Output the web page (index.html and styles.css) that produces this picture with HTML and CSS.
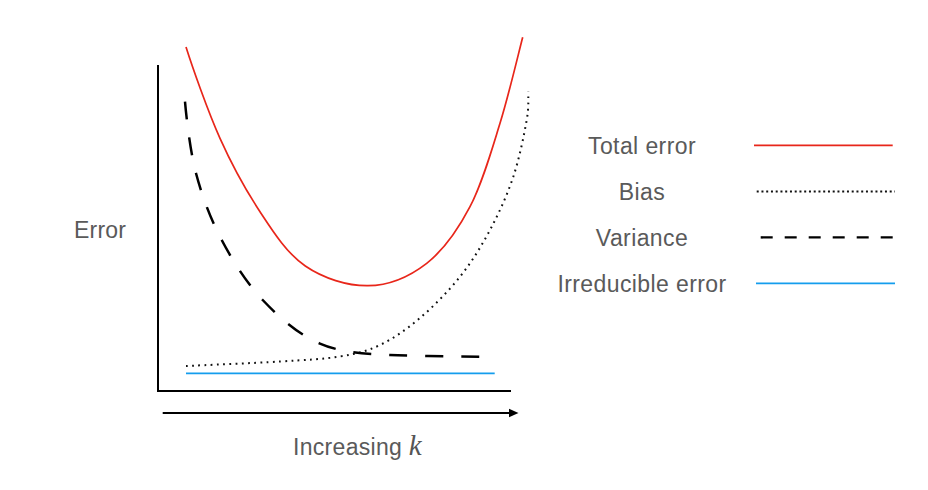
FILE: index.html
```html
<!DOCTYPE html>
<html lang="en">
<head>
<meta charset="utf-8">
<title>Bias–variance tradeoff</title>
<link rel="stylesheet" href="styles.css">
</head>
<body>
<div class="figure">
  <div class="ylabel">Error</div>
  <div class="plot-col">
    <svg class="plot" width="382" height="390" viewBox="150 30 382 390" xmlns="http://www.w3.org/2000/svg">
      <line class="axis" x1="158" y1="65" x2="158" y2="392"/>
      <line class="axis" x1="157" y1="391" x2="511" y2="391"/>
      <line class="axis" x1="162.7" y1="413" x2="511" y2="413"/>
      <polygon class="arrowhead" points="509,408.8 518.5,413 509,417.2"/>
      <line class="irreducible" x1="186" y1="373.3" x2="494.7" y2="373.3"/>
      <path class="bias" d="M186,366 C201.67,365.25 254.33,363.08 280,361.5 C305.67,359.92 323.33,359.25 340,356.5 C356.67,353.75 366.67,351.42 380,345 C393.33,338.58 406.67,329.38 420,318 C433.33,306.62 448.33,291.37 460,276.7 C471.67,262.03 481.12,246.67 490,230 C498.88,213.33 507.18,195.03 513.3,176.7 C519.42,158.37 524.2,134.17 526.7,120 C529.2,105.83 528.03,96.42 528.3,91.7"/>
      <path class="variance" d="M185,101.7 C186,113.7 189.88,150.25 196,173.3 C202.12,196.35 210.58,218.88 221.7,240 C232.82,261.12 246.43,282.78 262.7,300 C278.97,317.22 298.08,334.13 319.3,343.3 C340.52,352.47 363.33,353.8 390,355 C416.67,356.2 464.42,356.42 479.3,356.7"/>
      <path class="total" d="M186,47 C192,66 207.67,110.85 220,138.3 C232.33,165.75 246.12,190.58 260,211.7 C273.88,232.82 287.3,253.67 305.3,266 C323.3,278.33 347.43,285.98 368,285.7 C388.57,285.42 409.7,276.47 426.7,263.3 C443.7,250.13 457.78,230.03 470,206.7 C482.22,183.37 491.22,151.53 500,123.3 C508.78,95.07 518.9,51.6 522.7,37.3"/>
    </svg>
    <div class="xlabel">Increasing <span class="k">k</span></div>
  </div>
  <div class="legend">
    <div class="legend-label">Total error</div>
    <svg class="swatch" width="141" height="46" viewBox="0 0 141 46" xmlns="http://www.w3.org/2000/svg">
      <line class="total" x1="0" y1="22.4" x2="138.7" y2="22.4"/>
    </svg>
    <div class="legend-label">Bias</div>
    <svg class="swatch" width="141" height="46" viewBox="0 0 141 46" xmlns="http://www.w3.org/2000/svg">
      <line class="bias-legend" x1="2.7" y1="22.4" x2="141" y2="22.4"/>
    </svg>
    <div class="legend-label">Variance</div>
    <svg class="swatch" width="141" height="46" viewBox="0 0 141 46" xmlns="http://www.w3.org/2000/svg">
      <line class="variance-legend" x1="6.7" y1="22.4" x2="138.7" y2="22.4"/>
    </svg>
    <div class="legend-label">Irreducible error</div>
    <svg class="swatch" width="141" height="46" viewBox="0 0 141 46" xmlns="http://www.w3.org/2000/svg">
      <line class="irreducible" x1="2" y1="22.4" x2="141" y2="22.4"/>
    </svg>
  </div>
</div>
</body>
</html>
```

FILE: styles.css
```css
html, body {
  margin: 0;
  padding: 0;
  background: #ffffff;
}

.figure {
  display: flex;
  align-items: flex-start;
  width: 928px;
  height: 490px;
  overflow: hidden;
  font-family: "Liberation Sans", Arial, Helvetica, sans-serif;
  color: #5a5a5a;
}

.ylabel {
  width: 76px;
  margin: 216.8px 0 0 74px;
  font-size: 23px;
  line-height: 27px;
  letter-spacing: 0.2px;
  white-space: nowrap;
}

.plot-col {
  display: flex;
  flex-direction: column;
  margin-top: 30px;
}

.plot {
  display: block;
}

.xlabel {
  margin: 13.5px 0 0 143px;
  font-size: 23px;
  line-height: 27px;
  letter-spacing: 0.3px;
  white-space: nowrap;
}

.k {
  font-family: "Liberation Serif", "Times New Roman", serif;
  font-style: italic;
  font-size: 29px;
  line-height: 20px;
  letter-spacing: 0;
  color: #555555;
}

.axis {
  stroke: #000000;
  stroke-width: 2;
  fill: none;
}

.arrowhead {
  fill: #000000;
  stroke: none;
}

.total {
  stroke: #e8261a;
  stroke-width: 1.7;
  fill: none;
}

.irreducible {
  stroke: #149ded;
  stroke-width: 1.8;
  fill: none;
}

.bias {
  stroke: #111111;
  stroke-width: 2;
  stroke-dasharray: 1.8 4.4;
  fill: none;
}

.variance {
  stroke: #000000;
  stroke-width: 2.5;
  stroke-dasharray: 18 18;
  fill: none;
}

.bias-legend {
  stroke: #111111;
  stroke-width: 2;
  stroke-dasharray: 2 2.75;
}

.variance-legend {
  stroke: #000000;
  stroke-width: 2.4;
  stroke-dasharray: 12 12;
}

.legend {
  display: grid;
  grid-template-columns: 180px 141px;
  grid-auto-rows: 46px;
  column-gap: 22px;
  margin: 122.8px 0 0 20px;
}

.legend-label {
  font-size: 23px;
  line-height: 46px;
  letter-spacing: 0.4px;
  text-align: center;
  white-space: nowrap;
}

.swatch {
  display: block;
}
```
